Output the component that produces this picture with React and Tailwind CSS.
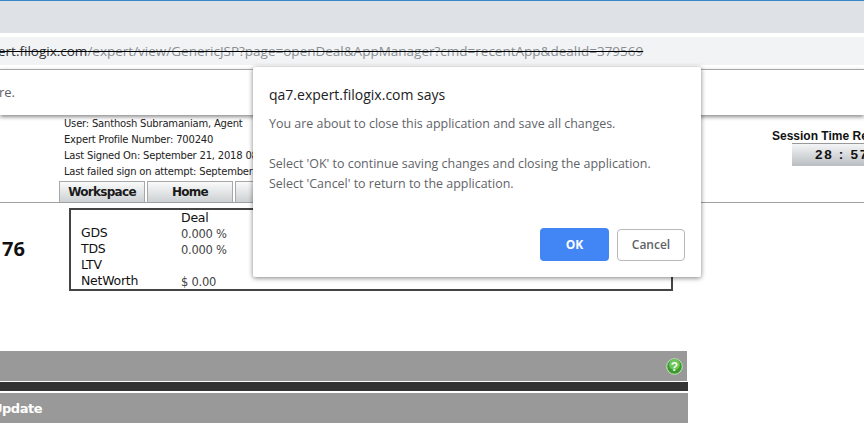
export default function App() {
  return (
    <div className="relative w-[864px] h-[423px] overflow-hidden bg-white font-['Liberation_Sans',sans-serif]">
      {/* browser chrome */}
      <div className="h-[33px] bg-[#dee1e6] border-t border-[#3a87c8]" />
      <div className="h-[36px] bg-white pt-[4px]">
        <div className="h-[28px] bg-[#f1f3f4] overflow-hidden whitespace-nowrap text-[13.5px] leading-[28px] font-['Open_Sans',sans-serif] line-through">
          <span className="text-[#303134] ml-[-2px]">ert.filogix.com</span>
          <span className="text-[#8a8e92]">/expert/view/GenericJSP?page=openDeal&amp;AppManager?cmd=recentApp&amp;dealId=379569</span>
        </div>
      </div>
      {/* info bar */}
      <div className="h-[46px] border-t border-[#a8a8a8] shadow-[0_2px_4px_rgba(0,0,0,0.45)] bg-white relative z-10 flex items-center text-[13px] text-[#5f6368] font-['Open_Sans',sans-serif]">
        <span className="ml-[-1px]">re.</span>
      </div>
      {/* header */}
      <div className="h-[88px] border-b border-[#a0a0a0] relative flex overflow-hidden">
        <div className="pl-[64px] pt-[1px] w-[700px] shrink-0">
          <div className="text-[10px] leading-[16px] text-[#222] font-['DejaVu_Sans',sans-serif] whitespace-nowrap tracking-[-0.2px] h-[64px]">
            <div>User: Santhosh Subramaniam, Agent</div>
            <div>Expert Profile Number: 700240</div>
            <div>Last Signed On: September 21, 2018 08:12</div>
            <div>Last failed sign on attempt: September 20, 2018</div>
          </div>
          <div className="flex gap-[2px] ml-[-5px] mt-[1px]">
            {["Workspace", "Home", ""].map((t, i) => (
              <div key={i} className="w-[86px] h-[23px] pb-[2px] border border-[#a8a8a8] border-b-0 bg-gradient-to-b from-[#fafafa] to-[#c9cdd0] flex items-center justify-center text-[12px] font-bold text-[#1a1a1a] font-['DejaVu_Sans',sans-serif] tracking-[-0.7px]">
                {t}
              </div>
            ))}
          </div>
        </div>
        <div className="pl-[72px] pt-[14px] whitespace-nowrap shrink-0">
          <div className="text-[12px] leading-[14px] font-bold text-[#111]">Session Time Remaining</div>
          <div className="ml-[20px] w-[100px] h-[23px] bg-gradient-to-b from-[#f4f5f6] to-[#b9bec2] border-t border-[#999] text-[13.5px] font-bold tracking-[1.7px] leading-[22px] pl-[23px] text-[#111]">28 : 57</div>
        </div>
      </div>
      {/* metrics */}
      <div className="h-[148px] relative flex pt-[5px]">
        <div className="w-[69px] pt-[27px] text-[20px] leading-[28px] font-bold font-['Open_Sans',sans-serif] text-[#111] overflow-hidden whitespace-nowrap">
          <span className="ml-[2px]">76</span>
        </div>
        <div className="w-[604px] h-[83px] border-2 border-[#444] pl-[10px] text-[12.5px] leading-[16px] text-[#222] font-['DejaVu_Sans',sans-serif] tracking-[-0.25px]">
          <div className="grid grid-cols-[100px_100px] grid-rows-[15px_16px_16px_16px_16px]">
            <span /><span className="font-medium text-[#111]">Deal</span>
            <span className="text-[#111]">GDS</span><span className="text-[11.5px] text-[#444] mt-[1px]">0.000 %</span>
            <span className="text-[#111]">TDS</span><span className="text-[11.5px] text-[#444] mt-[1px]">0.000 %</span>
            <span className="text-[#111]">LTV</span><span />
            <span className="text-[#111]">NetWorth</span><span className="text-[11.5px] text-[#444] mt-[1px]">$ 0.00</span>
          </div>
        </div>
      </div>
      {/* section bars */}
      <div className="w-[687px] h-[30px] bg-[#999999] flex items-center justify-end pr-[4px]">
        <svg width="17" height="17" viewBox="0 0 17 17">
          <circle cx="8.5" cy="8.5" r="7.8" fill="#3c9a2e" stroke="#c6e6bd" strokeWidth="1" />
          <circle cx="8.5" cy="6.5" r="5.4" fill="#6fc55c" />
          <text x="8.5" y="12.7" textAnchor="middle" fontSize="12" fontWeight="700" fill="#f4fff0" fontFamily="Liberation Sans, sans-serif">?</text>
        </svg>
      </div>
      <div className="w-[688px] h-[9px] mt-[1px] bg-[#333333]" />
      <div className="w-[688px] h-[30px] mt-[2px] bg-[#999999] text-white font-bold text-[13px] leading-[31px] font-['DejaVu_Sans',sans-serif] overflow-hidden tracking-[-0.5px]">
        <span className="ml-[-8px]">Update</span>
      </div>

      {/* JS dialog */}
      <div className="absolute z-20 left-[253px] top-[67px] w-[448px] h-[210px] bg-white rounded-[2px] shadow-[0_1px_5px_rgba(0,0,0,0.5)] px-[16px] pt-[18px] font-['Open_Sans',sans-serif]">
        <div className="text-[14px] leading-[20px] text-[#202124]">qa7.expert.filogix.com says</div>
        <div className="mt-[9px] text-[12.45px] leading-[20px] text-[#5f6368]">
          <div>You are about to close this application and save all changes.</div>
          <div className="mt-[20px]">Select 'OK' to continue saving changes and closing the application.</div>
          <div>Select 'Cancel' to return to the application.</div>
        </div>
        <div className="absolute right-[16px] bottom-[16px] flex gap-[8px] items-center">
          <div className="w-[69px] h-[33px] bg-[#4285f4] rounded-[4px] flex items-center justify-center text-[12px] font-bold text-white">OK</div>
          <div className="w-[68px] h-[32px] bg-white border border-[#b8b8b8] rounded-[4px] flex items-center justify-center text-[12px] font-semibold text-[#5f6368]">Cancel</div>
        </div>
      </div>
    </div>
  );
}
